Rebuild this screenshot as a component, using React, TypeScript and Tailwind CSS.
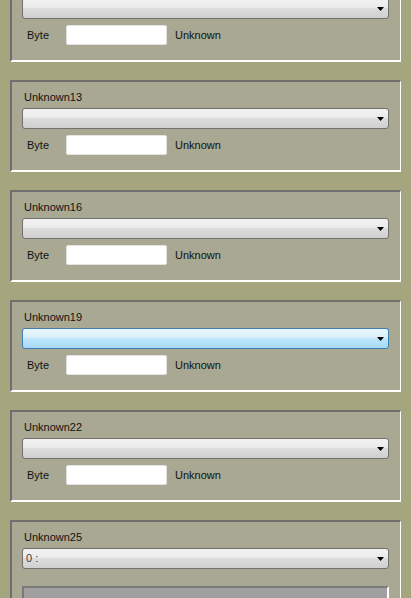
import React from 'react';

type Field = { title: string; focused?: boolean };

// first group is scrolled up past the top edge, its title is out of view
const groups: Field[] = [
  { title: '' },
  { title: 'Unknown13' },
  { title: 'Unknown16' },
  { title: 'Unknown19', focused: true },
  { title: 'Unknown22' },
];

function Arrow() {
  return (
    <svg width="7" height="4" viewBox="0 0 7 4" className="shrink-0">
      <path d="M0 0H7L3.5 4Z" fill="#000" />
    </svg>
  );
}

function Combo({ focused, value }: { focused?: boolean; value?: string }) {
  return (
    <div
      className={
        'h-[21px] w-full rounded-[3px] border flex items-center pl-[3px] pr-[4px] overflow-hidden ' +
        (focused
          ? 'border-[#3c7fb1] bg-[linear-gradient(to_bottom,#eaf6fd_0%,#d9f0fc_45%,#bee6fd_50%,#a7d9f5_100%)]'
          : 'border-[#707070] bg-[linear-gradient(to_bottom,#f2f2f2_0%,#ebebeb_45%,#dddddd_50%,#cfcfcf_100%)]')
      }
    >
      <span className="flex-1 text-[11px] leading-[13px] text-[#3a3a3a]">{value}</span>
      <Arrow />
    </div>
  );
}

function GroupBox({ title, focused }: Field) {
  return (
    <div className="h-[92px] border-t-2 border-l-2 border-r border-b-2 border-t-[#6f6f6f] border-l-[#6f6f6f] border-r-white border-b-white bg-[#a9a993] pl-[10px] pr-[11px] pt-[9px]">
      <div className="h-[13px] leading-[13px] text-[11px] text-[#111] mb-[4px] pl-[2px]">{title}</div>
      <Combo focused={focused} />
      <div className="mt-[6px] flex items-center">
        <span className="w-[44px] pl-[5px] text-[11px] text-[#111]">Byte</span>
        <div className="h-[20px] w-[101px] rounded-[2px] border border-[#e3e3e3] bg-white" />
        <span className="ml-[8px] text-[11px] text-[#111]">Unknown</span>
      </div>
    </div>
  );
}

export default function App() {
  return (
    <div className="h-[598px] w-[411px] overflow-hidden bg-[#a6a67e]" style={{ fontFamily: '"Liberation Sans", Arial, sans-serif' }}>
      <div className="-mt-[30px] ml-[10px] w-[391px] flex flex-col gap-[18px]">
        {groups.map((g, i) => (
          <GroupBox key={i} {...g} />
        ))}
        <div className="h-[120px] border-t-2 border-l-2 border-r border-b-2 border-t-[#6f6f6f] border-l-[#6f6f6f] border-r-white border-b-white bg-[#a9a993] pl-[10px] pr-[11px] pt-[9px]">
          <div className="h-[13px] leading-[13px] text-[11px] text-[#111] mb-[4px] pl-[2px]">Unknown25</div>
          <Combo value="0 :" />
          <div className="mt-[17px] h-[40px] border-t-2 border-l-2 border-r-2 border-b-2 border-t-[#7a7a7a] border-l-[#7a7a7a] border-r-white border-b-white bg-[#a0a0a0]" />
        </div>
      </div>
    </div>
  );
}
